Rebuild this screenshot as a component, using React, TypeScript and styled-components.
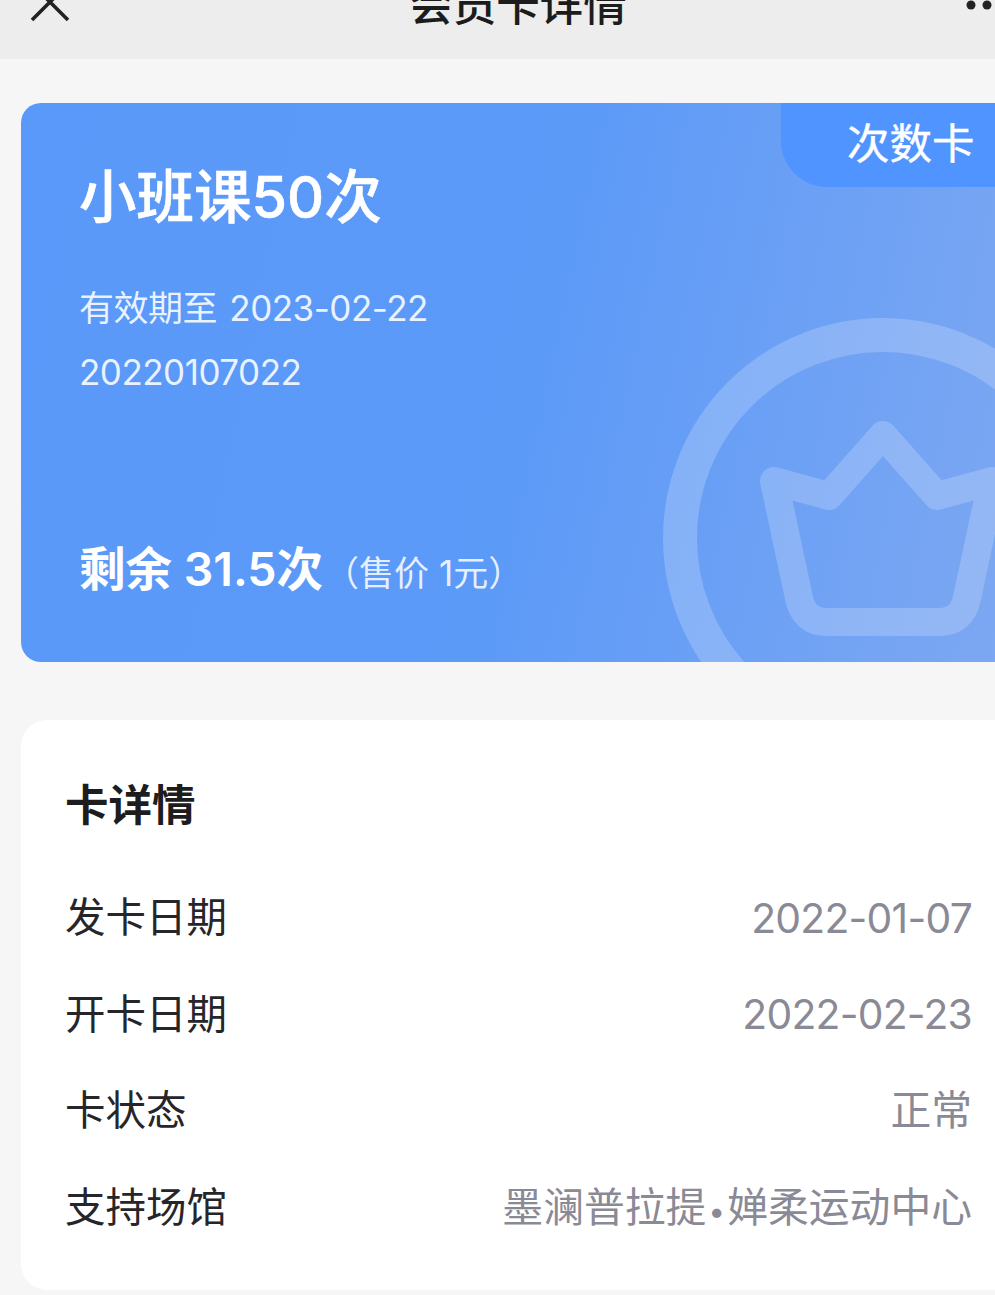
import React from 'react';
import styled, { createGlobalStyle } from 'styled-components';

const GlobalStyle = createGlobalStyle`
  html, body {
    margin: 0;
    padding: 0;
    background: #f6f6f6;
  }
  body {
    width: 995px;
    height: 1295px;
    overflow: hidden;
    font-family: Inter, "Noto Sans CJK SC", sans-serif;
  }
`;

const Page = styled.div`
  width: 995px;
  height: 1295px;
  overflow: hidden;
  display: flex;
  flex-direction: column;
  background: #f6f6f6;
`;

const Header = styled.header`
  height: 59px;
  flex: none;
  box-sizing: border-box;
  padding: 0 0 39px 30px;
  background: #ededed;
  display: grid;
  grid-template-columns: 1fr auto 1fr;
  grid-template-rows: 20px;
  align-items: center;
  color: #1c1c1c;
`;

const HeaderTitle = styled.h1`
  margin: -10px 0 0 11px;
  font-size: 43.5px;
  line-height: 48px;
  font-weight: 500;
  white-space: nowrap;
`;

const CloseIcon = styled.svg`
  width: 40px;
  height: 40px;
  stroke: #222;
  stroke-width: 3.6;
  fill: none;
`;

const MoreIcon = styled.svg`
  width: 56px;
  height: 12px;
  justify-self: end;
  margin: -10px -22px 0 0;
  fill: #222;
`;

const CardWrap = styled.section`
  margin: 44px 0 0 21px;
  height: 559px;
  position: relative;
  overflow: hidden;
  box-sizing: border-box;
  padding: 64px 0 0 58px;
  border-radius: 20px 0 0 20px;
  display: flex;
  flex-direction: column;
  color: #fff;
  background: linear-gradient(102deg, #5a99f9 0%, #5c9af8 52%, #7ca7f2 100%);
`;

const Tag = styled.div`
  position: absolute;
  top: 0;
  right: 0;
  width: 214px;
  height: 84px;
  box-sizing: border-box;
  padding: 17px 0 0 66px;
  background: #5095ff;
  border-bottom-left-radius: 46px;
  font-size: 42.5px;
  line-height: 48px;
  font-weight: 400;
  -webkit-text-stroke: 0.4px #fff;
  white-space: nowrap;
`;

const Watermark = styled.svg`
  position: absolute;
  right: 0;
  bottom: 0;
  width: 332px;
  height: 344px;
  fill: none;
  stroke: rgba(255, 255, 255, 0.2);
`;

const CardTitle = styled.h2`
  margin: 0;
  font-size: 57.5px;
  line-height: 60px;
  font-weight: 500;
  -webkit-text-stroke: 0.6px #fff;
`;

const CardMeta = styled.div`
  margin-top: 49px;
  font-size: 35px;
  line-height: 64px;
  letter-spacing: -0.5px;
  word-spacing: 3px;
  color: rgba(255, 255, 255, 0.88);
`;

const Remaining = styled.div`
  margin-top: 135px;
  display: flex;
  align-items: baseline;
  white-space: nowrap;
`;

const RemainingValue = styled.span`
  font-size: 46.5px;
  line-height: 60px;
  font-weight: 600;
`;

const Price = styled.span`
  margin-left: 1px;
  font-size: 35px;
  color: rgba(255, 255, 255, 0.85);
`;

const DetailCard = styled.section`
  margin: 58px 0 0 21px;
  height: 570px;
  box-sizing: border-box;
  padding: 55px 23px 0 44px;
  background: #fff;
  border-radius: 26px 0 0 26px;
`;

const DetailTitle = styled.h3`
  margin: 0 0 31.5px;
  font-size: 43.5px;
  line-height: 60px;
  font-weight: 600;
  color: #1d1d1d;
`;

const Row = styled.div`
  height: 96.5px;
  display: flex;
  align-items: center;
  justify-content: space-between;
  font-size: 40.5px;
  white-space: nowrap;
`;

const RowLabel = styled.span`
  color: #26262a;
`;

const RowValue = styled.span<{ $numeric?: boolean }>`
  padding-top: ${(p) => (p.$numeric ? '6px' : '0')};
  font-size: 40.8px;
  letter-spacing: ${(p) => (p.$numeric ? '-0.75px' : '0')};
  color: #8a8a96;
`;

const Dot = styled.span`
  margin: 0 2px;
  font-size: 30px;
`;

const rows: { label: string; value: React.ReactNode; numeric?: boolean }[] = [
  { label: '发卡日期', value: '2022-01-07', numeric: true },
  { label: '开卡日期', value: '2022-02-23', numeric: true },
  { label: '卡状态', value: '正常' },
  {
    label: '支持场馆',
    value: (
      <>
        墨澜普拉提<Dot>•</Dot>婵柔运动中心
      </>
    ),
  },
];

const App: React.FC = () => {
  return (
    <Page>
      <GlobalStyle />
      <Header>
        <CloseIcon viewBox="0 0 40 40">
          <path d="M2 -6 L38 30 M38 -6 L2 30" />
        </CloseIcon>
        <HeaderTitle>会员卡详情</HeaderTitle>
        <MoreIcon viewBox="0 0 56 12">
          <circle cx="10" cy="6" r="4.5" />
          <circle cx="26" cy="6" r="4.5" />
          <circle cx="42" cy="6" r="4.5" />
        </MoreIcon>
      </Header>
      <CardWrap>
        <Watermark viewBox="0 0 332 344">
          <circle cx="220" cy="220" r="203" strokeWidth="34" />
          <path
            d="M111 163 L166 178 L220 117 L274 178 L329 163 L304 280 Q299 304 276 304 L164 304 Q141 304 136 280 Z"
            strokeWidth="28"
            strokeLinejoin="round"
          />
        </Watermark>
        <Tag>次数卡</Tag>
        <CardTitle>小班课50次</CardTitle>
        <CardMeta>
          <div>有效期至 2023-02-22</div>
          <div>20220107022</div>
        </CardMeta>
        <Remaining>
          <RemainingValue>剩余 31.5次</RemainingValue>
          <Price>（售价 1元）</Price>
        </Remaining>
      </CardWrap>
      <DetailCard>
        <DetailTitle>卡详情</DetailTitle>
        {rows.map((row) => (
          <Row key={row.label}>
            <RowLabel>{row.label}</RowLabel>
            <RowValue $numeric={row.numeric}>{row.value}</RowValue>
          </Row>
        ))}
      </DetailCard>
    </Page>
  );
};

export default App;
